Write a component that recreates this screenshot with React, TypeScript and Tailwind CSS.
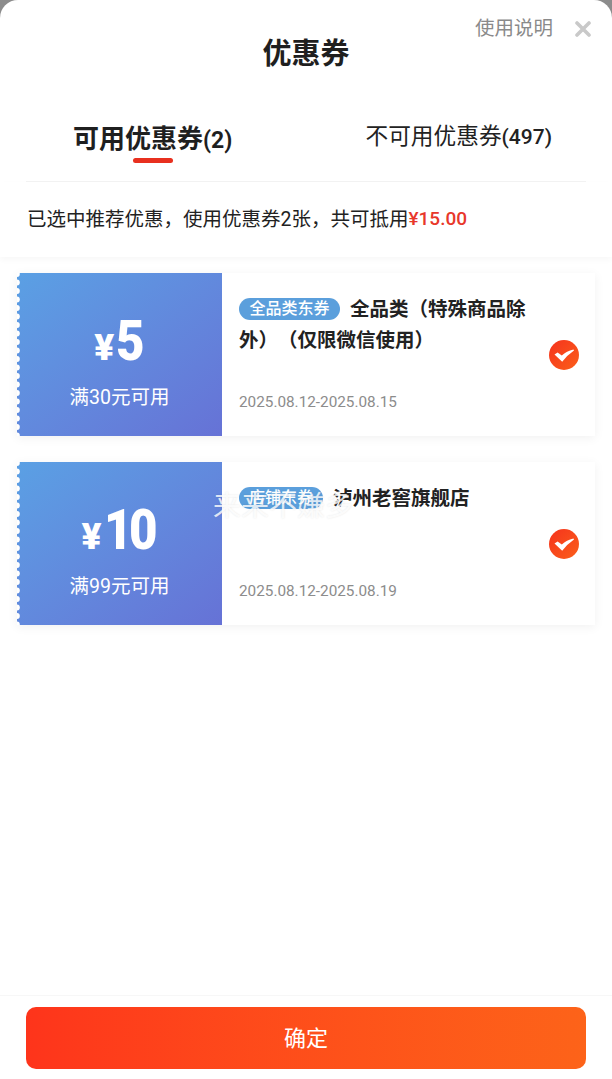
import React from 'react';

const font = { fontFamily: 'Roboto, "Noto Sans CJK SC", sans-serif' };

const coupons = [
  { id: 1, amount: '5', cond: '满30元可用', tag: '全品类东券', title: '全品类（特殊商品除外）（仅限微信使用）', date: '2025.08.12-2025.08.15', tagW: 'w-[101px]', amountGap: '-mr-[4px]' },
  { id: 2, amount: '10', cond: '满99元可用', tag: '店铺东券', title: '泸州老窖旗舰店', date: '2025.08.12-2025.08.19', tagW: 'w-[84px]', amountGap: '-mr-[7px]' },
];

function Scallops() {
  const dots = Array.from({ length: 20 });
  return (
    <svg className="absolute left-0 top-0 h-full w-[5px]" viewBox="0 0 5 163" preserveAspectRatio="none">
      {dots.map((_, i) => (
        <circle key={i} cx="-0.2" cy={1 + i * 8.5} r="3" fill="#ffffff" />
      ))}
    </svg>
  );
}

function CheckBadge() {
  return (
    <svg width="30" height="30" viewBox="0 0 30 30" className="shrink-0">
      <defs>
        <linearGradient id="badge" x1="0" y1="0" x2="1" y2="1">
          <stop offset="0" stopColor="#f5331d" />
          <stop offset="1" stopColor="#fb5f1a" />
        </linearGradient>
      </defs>
      <circle cx="15" cy="15" r="15" fill="url(#badge)" />
      <path d="M5.5 14.6 L8.6 12.4 L12.8 15.6 Q17.5 11 24.5 9.4 L25 10.6 Q18.5 15 13.2 21.8 Z" fill="#ffffff" />
    </svg>
  );
}

function CouponCard({ c }: { c: (typeof coupons)[number] }) {
  return (
    <div className="flex h-[163px] bg-white shadow-[0_2px_10px_rgba(0,0,0,0.06)] mr-[17px] ml-[17px]">
      <div className="relative w-[205px] shrink-0 flex flex-col items-center bg-gradient-to-br from-[#5aa0e4] to-[#6672d6] text-white">
        <Scallops />
        <div className="flex items-baseline h-[60px] mt-[38px] leading-[60px] font-black">
          <span className="text-[37px] mr-[2px]">¥</span>
          <span className={`inline-block text-[56px] tracking-[-4px] pr-[4px] scale-x-[0.88] origin-left ${c.amountGap}`}>{c.amount}</span>
        </div>
        <div className="mt-[13px] text-[19.5px] leading-[28px]">{c.cond}</div>
      </div>
      <div className="flex-1 flex items-center pl-[17px] pr-[16px]">
        <div className="flex-1 flex flex-col h-full pt-[21px] pb-[24px] justify-between">
          <div className="text-[19.5px] leading-[31px] font-bold text-[#222222] pr-[6px] [text-spacing-trim:space-all]">
            <span className={`inline-block ${c.tagW} h-[22px] rounded-full bg-[#5b9fdc] text-white text-[16px] leading-[22px] font-medium text-center align-[2px] mr-[10px]`}>
              {c.tag}
            </span>
            {c.title}
          </div>
          <div className="text-[15.3px] leading-[20px] text-[#8c8c8c]">{c.date}</div>
        </div>
        <CheckBadge />
      </div>
    </div>
  );
}

export default function App() {
  return (
    <div className="relative w-[612px] h-[1079px] bg-[#8c8c8c] overflow-hidden" style={font}>
      <div className="flex flex-col h-full bg-white rounded-t-[18px]">
        {/* Header */}
        <div className="relative h-[106px] flex justify-center shrink-0">
          <h1 className="mt-[34px] text-[29px] leading-[40px] font-bold text-[#1f1f1f]">优惠券</h1>
          <div className="absolute right-[21px] top-[15px] flex items-center gap-[22px]">
            <span className="text-[19.5px] leading-[27px] text-[#8a8a8a]">使用说明</span>
            <svg width="16" height="16" viewBox="0 0 16 16">
              <path d="M2 2 L14 14 M14 2 L2 14" stroke="#c9c9c9" strokeWidth="3.6" strokeLinecap="round" />
            </svg>
          </div>
        </div>

        {/* Tabs */}
        <div className="mx-[26px] h-[76px] shrink-0 border-b border-[#f3f3f3] flex items-start">
          <div className="relative ml-[47px] mt-[13px] text-[26px] leading-[40px] font-bold text-[#1f1f1f]">
            可用优惠券<span className="text-[23px]">(2)</span>
            <div className="absolute left-[60px] top-[39px] w-[40px] h-[5px] rounded-full bg-[#e8301f]" />
          </div>
          <div className="ml-auto mr-[34px] mt-[13px] text-[22.7px] leading-[36px] text-[#222222]">
            不可用优惠券<span className="font-medium text-[21px]">(497)</span>
          </div>
        </div>

        {/* Summary */}
        <div className="h-[75px] shrink-0 flex items-center pl-[27px] text-[19.5px] text-[#222222] shadow-[0_3px_6px_rgba(0,0,0,0.03)]">
          已选中推荐优惠，使用优惠券2张，共可抵用
          <span className="text-[#e8372a] font-medium text-[19px]">¥15.00</span>
        </div>

        {/* Coupon list */}
        <div className="flex-1 flex flex-col gap-[26px] pt-[16px]">
          {coupons.map((c) => (
            <CouponCard key={c.id} c={c} />
          ))}
        </div>

        {/* Footer */}
        <div className="h-[84px] shrink-0 border-t border-[#f7f7f7] pt-[11px] px-[26px]">
          <button className="w-full h-[62px] rounded-[10px] bg-gradient-to-r from-[#fe341b] to-[#fd6319] text-white text-[22px]">
            确定
          </button>
        </div>
      </div>

      {/* Watermark */}
      <div className="absolute left-[213px] top-[487px] text-[28px] leading-[40px] text-white/80 [text-shadow:0_0_2px_rgba(0,0,0,0.1)] pointer-events-none">
        来来不嫌多
      </div>
    </div>
  );
}
